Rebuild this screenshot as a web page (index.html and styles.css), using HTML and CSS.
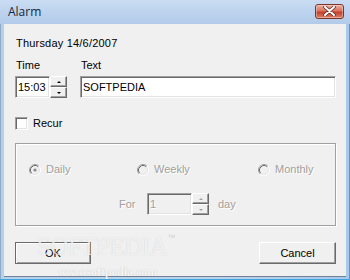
FILE: index.html
```html
<!DOCTYPE html>
<html>
<head>
<meta charset="utf-8">
<link rel="stylesheet" href="styles.css">
</head>
<body>
<div class="window">
  <div class="titlebar">
    <span class="title">Alarm</span>
    <span class="close">
      <svg width="13" height="10" viewBox="0 0 13 10">
        <path d="M2 1 L11 9 M11 1 L2 9" stroke="#5a2a22" stroke-width="3.4" stroke-linecap="round"/>
        <path d="M2 1 L11 9 M11 1 L2 9" stroke="#ffffff" stroke-width="2" stroke-linecap="round"/>
      </svg>
    </span>
  </div>
  <div class="client">
    <div class="date">Thursday 14/6/2007</div>
    <div class="fields">
      <div class="field time-field">
        <div class="label">Time</div>
        <div class="spin">
          <div class="edit time-edit">15:03</div>
          <div class="arrows">
            <span class="arr"><i class="tri up"></i></span>
            <span class="arr"><i class="tri down"></i></span>
          </div>
        </div>
      </div>
      <div class="field text-field">
        <div class="label">Text</div>
        <div class="edit text-edit">SOFTPEDIA</div>
      </div>
    </div>
    <div class="check"><span class="box"></span><span>Recur</span></div>
    <div class="group">
      <div class="radios">
        <div class="radio">
          <svg class="rb" width="12" height="12" viewBox="0 0 12 12">
            <circle cx="6" cy="6" r="4.2" fill="#f0f0f0"/>
            <path d="M9.89 2.11 A5.5 5.5 0 0 0 2.11 9.89" stroke="#a0a0a0" fill="none"/>
            <path d="M9.18 2.82 A4.5 4.5 0 0 0 2.82 9.18" stroke="#696969" fill="none"/>
            <path d="M9.89 2.11 A5.5 5.5 0 0 1 2.11 9.89" stroke="#ffffff" fill="none"/>
            <path d="M9.18 2.82 A4.5 4.5 0 0 1 2.82 9.18" stroke="#e3e3e3" fill="none"/>
            <circle cx="6" cy="6" r="1.6" fill="#8a8a8a"/>
          </svg>
          <span class="dis">Daily</span>
        </div>
        <div class="radio">
          <svg class="rb" width="12" height="12" viewBox="0 0 12 12">
            <circle cx="6" cy="6" r="4.2" fill="#f0f0f0"/>
            <path d="M9.89 2.11 A5.5 5.5 0 0 0 2.11 9.89" stroke="#a0a0a0" fill="none"/>
            <path d="M9.18 2.82 A4.5 4.5 0 0 0 2.82 9.18" stroke="#696969" fill="none"/>
            <path d="M9.89 2.11 A5.5 5.5 0 0 1 2.11 9.89" stroke="#ffffff" fill="none"/>
            <path d="M9.18 2.82 A4.5 4.5 0 0 1 2.82 9.18" stroke="#e3e3e3" fill="none"/>
          </svg>
          <span class="dis">Weekly</span>
        </div>
        <div class="radio">
          <svg class="rb" width="12" height="12" viewBox="0 0 12 12">
            <circle cx="6" cy="6" r="4.2" fill="#f0f0f0"/>
            <path d="M9.89 2.11 A5.5 5.5 0 0 0 2.11 9.89" stroke="#a0a0a0" fill="none"/>
            <path d="M9.18 2.82 A4.5 4.5 0 0 0 2.82 9.18" stroke="#696969" fill="none"/>
            <path d="M9.89 2.11 A5.5 5.5 0 0 1 2.11 9.89" stroke="#ffffff" fill="none"/>
            <path d="M9.18 2.82 A4.5 4.5 0 0 1 2.82 9.18" stroke="#e3e3e3" fill="none"/>
          </svg>
          <span class="dis">Monthly</span>
        </div>
      </div>
      <div class="for-row">
        <span class="dis for-label">For</span>
        <div class="spin">
          <div class="edit dis-edit"><span class="dis">1</span></div>
          <div class="arrows">
            <span class="arr"><i class="tri up grey"></i></span>
            <span class="arr"><i class="tri down grey"></i></span>
          </div>
        </div>
        <span class="dis day-label">day</span>
      </div>
    </div>
    <div class="buttons">
      <button class="btn ok">OK</button>
      <button class="btn">Cancel</button>
    </div>
  </div>
  <div class="watermark">
    <span class="wm-big">SOFTPEDIA</span><span class="wm-tm">™</span>
    <span class="wm-url">www.softpedia.com</span>
  </div>
</div>
</body>
</html>
```
FILE: styles.css
```css
* { box-sizing: border-box; }
html, body { margin: 0; padding: 0; }
body {
  width: 350px;
  height: 280px;
  overflow: hidden;
  font-family: "Liberation Sans", Arial, sans-serif;
  font-size: 11px;
  color: #000;
}
.window {
  position: relative;
  width: 350px;
  height: 280px;
  display: flex;
  flex-direction: column;
  background: linear-gradient(90deg, #b6cfea 0%, #bcd3ec 60%, #a9c8ea 100%);
  padding: 0 4px 4px 4px;
  box-shadow: inset -1px 0 0 #3ea6dd, inset 0 -1px 0 #3ea6dd, inset 1px 0 0 #8fa9c8;
}
.titlebar {
  height: 24px;
  margin: 0 -4px;
  padding: 0 6px 0 8px;
  display: flex;
  align-items: center;
  justify-content: space-between;
  background: linear-gradient(180deg, #c9dcf2 0%, #bdd3ee 50%, #b3cbe9 100%);
}
.title {
  font-family: "Open Sans", "Liberation Sans", sans-serif;
  font-size: 12px;
  color: #16263b;
  margin-top: -1px;
}
.close {
  width: 29px;
  height: 15px;
  margin-top: -2px;
  border: 1px solid #7d3528;
  border-radius: 3px;
  background: linear-gradient(180deg, #eab0a0 0%, #d9735f 45%, #c2412a 55%, #d9806a 100%);
  display: flex;
  align-items: center;
  justify-content: center;
  box-shadow: inset 0 0 0 1px rgba(255, 255, 255, 0.35);
}
.client {
  flex: 1;
  background: #f0f0f0;
  padding: 0 10px 0 11px;
  display: flex;
  flex-direction: column;
  box-shadow: 0 1px 0 #6f8196;
}
.date {
  margin-top: 13px;
  line-height: 13px;
  padding-left: 1px;
  letter-spacing: 0.2px;
}
.fields {
  display: flex;
  margin-top: 9px;
}
.field { display: flex; flex-direction: column; }
.time-field { width: 65px; }
.text-field { width: 256px; }
.label {
  line-height: 13px;
  padding-left: 1px;
  margin-bottom: 4px;
}
.edit {
  height: 22px;
  background: #fff;
  border-top: 1px solid #a0a0a0;
  border-left: 1px solid #a0a0a0;
  border-right: 1px solid #fff;
  border-bottom: 1px solid #fff;
  box-shadow: inset 1px 1px 0 #696969, inset -1px -1px 0 #e3e3e3;
  line-height: 20px;
  padding-left: 2px;
}
.time-edit { width: 35px; }
.text-edit { width: 256px; }
.spin { display: flex; }
.arrows {
  display: flex;
  flex-direction: column;
  width: 17px;
  height: 22px;
}
.arr {
  flex: 1;
  display: flex;
  align-items: center;
  justify-content: center;
  background: #f0f0f0;
  border-top: 1px solid #fff;
  border-left: 1px solid #fff;
  border-right: 1px solid #696969;
  border-bottom: 1px solid #696969;
  box-shadow: inset -1px -1px 0 #a0a0a0;
}
.tri {
  display: block;
  width: 0;
  height: 0;
  border-left: 2px solid transparent;
  border-right: 2px solid transparent;
}
.tri.up { border-bottom: 2px solid #000; }
.tri.down { border-top: 2px solid #000; }
.tri.up.grey { border-bottom-color: #a0a0a0; }
.tri.down.grey { border-top-color: #a0a0a0; }
.check {
  display: flex;
  align-items: center;
  margin-top: 19px;
  height: 13px;
  line-height: 13px;
}
.box {
  width: 13px;
  height: 13px;
  background: #fff;
  border-top: 1px solid #a0a0a0;
  border-left: 1px solid #a0a0a0;
  border-right: 1px solid #fff;
  border-bottom: 1px solid #fff;
  box-shadow: inset 1px 1px 0 #696969, inset -1px -1px 0 #e3e3e3;
  margin-right: 5px;
}
.group {
  margin-top: 13px;
  width: 321px;
  height: 83px;
  border: 1px solid #a0a0a0;
  box-shadow: inset 1px 1px 0 #fff, 1px 1px 0 #fff;
  padding: 19px 0 0 13px;
  display: flex;
  flex-direction: column;
}
.radios {
  display: grid;
  grid-template-columns: 108px 121px 1fr;
  line-height: 13px;
}
.radio {
  display: flex;
  align-items: center;
  gap: 5px;
}
.rb { display: block; }
.dis {
  color: #a0a0a0;
  text-shadow: 1px 1px 0 #fff;
}
.for-row {
  display: flex;
  align-items: center;
  margin-top: 17px;
  padding-left: 89px;
}
.for-label { width: 29px; padding-left: 1px; }
.dis-edit {
  width: 45px;
  background: #f0f0f0;
}
.day-label { margin-left: 9px; }
.buttons {
  display: flex;
  justify-content: space-between;
  margin-top: 16px;
  width: 321px;
}
.btn {
  width: 77px;
  height: 22px;
  padding: 0;
  font-family: "Liberation Sans", Arial, sans-serif;
  font-size: 11px;
  color: #000;
  background: #f0f0f0;
  border-top: 1px solid #fff;
  border-left: 1px solid #fff;
  border-right: 1px solid #696969;
  border-bottom: 1px solid #696969;
  box-shadow: inset -1px -1px 0 #a0a0a0;
}
.btn.ok {
  width: 76px;
  border: 1px solid #6a6a6a;
  box-shadow: inset 1px 1px 0 #fff, inset -1px -1px 0 #a0a0a0;
}
.watermark {
  position: absolute;
  left: 37px;
  top: 233px;
  width: 140px;
  pointer-events: none;
}
.wm-big {
  font-family: "Liberation Serif", serif;
  font-size: 25px;
  letter-spacing: -0.5px;
  color: rgba(255, 255, 255, 0.7);
  text-shadow: 0 0 1px rgba(120, 120, 120, 0.3);
}
.wm-tm {
  font-size: 8px;
  color: rgba(200, 200, 200, 0.8);
  vertical-align: top;
}
.wm-url {
  position: absolute;
  left: 21px;
  top: 32px;
  font-family: "Liberation Serif", serif;
  font-weight: bold;
  font-size: 12px;
  color: rgba(255, 255, 255, 0.85);
  text-shadow: 0 0 1px rgba(110, 110, 110, 0.4);
}
```
